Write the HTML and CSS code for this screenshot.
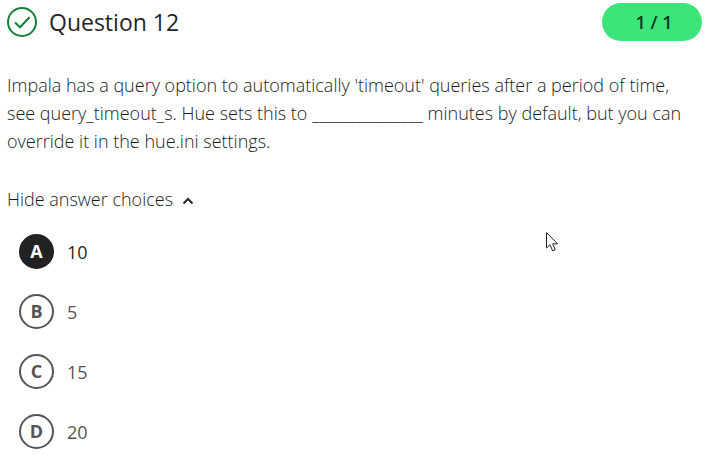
FILE: index.html
```html
<!DOCTYPE html>
<html lang="en">
<head>
<meta charset="utf-8">
<meta name="viewport" content="width=device-width, initial-scale=1">
<title>Question 12</title>
<link rel="stylesheet" href="styles.css">
</head>
<body>
<main class="question">
  <header class="header">
    <svg class="status" viewBox="0 0 30 30" role="img" aria-label="Correct">
      <circle cx="15" cy="15" r="14" />
      <path d="M8 15.5 L13 20.3 L22.5 10.3" />
    </svg>
    <h1 class="title">Question 12</h1>
    <span class="score">1 / 1</span>
  </header>
  <p class="prompt">Impala has a query option to automatically 'timeout' queries after a period of time, see query_timeout_s. Hue sets this to _______________ minutes by default, but you can override it in the hue.ini settings.</p>
  <button class="toggle" type="button" aria-expanded="true" aria-controls="choices">
    Hide answer choices
    <svg class="caret" viewBox="0 0 12 8" aria-hidden="true"><path d="M1.5 6.5 L6 2 L10.5 6.5" /></svg>
  </button>
  <div class="choices" id="choices" role="radiogroup" aria-label="Answer choices">
    <label class="choice"><input type="radio" name="answer" checked><span class="letter">A</span><span class="answer">10</span></label>
    <label class="choice"><input type="radio" name="answer"><span class="letter">B</span><span class="answer">5</span></label>
    <label class="choice"><input type="radio" name="answer"><span class="letter">C</span><span class="answer">15</span></label>
    <label class="choice"><input type="radio" name="answer"><span class="letter">D</span><span class="answer">20</span></label>
  </div>
</main>
<svg class="pointer" viewBox="0 0 14 22" aria-hidden="true"><path d="M1.5 1.5 V17 L5 13.7 L7.6 19.8 L10.2 18.7 L7.7 12.8 H12.5 Z" /></svg>
</body>
</html>
```
FILE: styles.css
```css
* {
  box-sizing: border-box;
}

body {
  margin: 0;
  background: #fff;
  color: #1c1c1c;
  font-family: "Open Sans", "Noto Sans", sans-serif;
  font-size: 18px;
  font-weight: 300;
  line-height: 28px;
}

.question {
  padding: 3px 4px 0 7px;
}

.header {
  display: flex;
  align-items: center;
  gap: 12px;
}

.status {
  width: 30px;
  height: 30px;
  fill: none;
  stroke: #14803c;
  stroke-width: 2;
}

.title {
  flex: 1;
  margin: 0;
  color: #262626;
  font-size: 23px;
  font-weight: 500;
}

.score {
  width: 100px;
  padding-left: 4px;
  border-radius: 19px;
  background: #3ce57a;
  color: #10391f;
  font-size: 18px;
  font-weight: 600;
  line-height: 38px;
  text-align: center;
}

.prompt {
  margin: 30px 0;
  padding-right: 12px;
}

.toggle {
  display: flex;
  align-items: center;
  gap: 9px;
  padding: 0;
  border: 0;
  background: none;
  color: inherit;
  font: inherit;
}

.caret {
  width: 12px;
  height: 8px;
  margin-top: 3px;
  fill: none;
  stroke: #262626;
  stroke-width: 2;
}

.choices {
  display: grid;
  gap: 25px;
  padding: 21px 12px 0;
}

.choice {
  position: relative;
  display: flex;
  align-items: center;
  gap: 13px;
  color: #555;
  font-weight: 400;
}

.choice input {
  position: absolute;
  margin: 0;
  opacity: 0;
}

.letter {
  width: 35px;
  height: 35px;
  border: 2px solid #555;
  border-radius: 50%;
  font-weight: 700;
  line-height: 31px;
  text-align: center;
}

input:checked + .letter {
  border-color: #222;
  background: #222;
  color: #fff;
}

input:checked ~ .answer {
  color: #262626;
  font-weight: 500;
}

.pointer {
  position: absolute;
  top: 231px;
  left: 545px;
  width: 14px;
  height: 22px;
  fill: #fff;
  stroke: #222;
}
```
